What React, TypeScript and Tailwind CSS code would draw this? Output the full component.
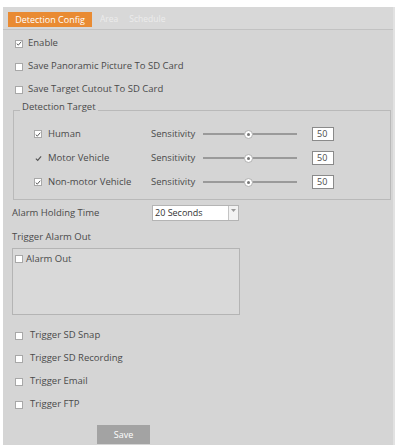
import React from 'react';

const Box = ({ checked, bare }: { checked?: boolean; bare?: boolean }) => (
  <span
    className={`w-[8px] h-[8px] shrink-0 flex items-center justify-center ${
      bare ? '' : 'bg-white border border-[#a8a8a8]'
    }`}
  >
    {checked && (
      <svg width="7" height="7" viewBox="0 0 8 8">
        <path d="M1 4.2 L3.1 6.2 L7 1.6" fill="none" stroke="#555" strokeWidth="1.3" />
      </svg>
    )}
  </span>
);

const Check = ({ label, checked, bare, gap = 'gap-[5px]' }: { label: string; checked?: boolean; bare?: boolean; gap?: string }) => (
  <label className={`flex items-center ${gap}`}>
    <Box checked={checked} bare={bare} />
    <span>{label}</span>
  </label>
);

const targets = [
  { name: 'Human', bare: false },
  { name: 'Motor Vehicle', bare: true },
  { name: 'Non-motor Vehicle', bare: false },
];

const triggers = ['Trigger SD Snap', 'Trigger SD Recording', 'Trigger Email', 'Trigger FTP'];

export default function App() {
  return (
    <div
      className="w-[398px] h-[445px] bg-white overflow-hidden pt-[7px] pl-[3px] text-[9.5px] text-[#4a4a4a]"
      style={{ fontFamily: '"Open Sans", "Noto Sans", sans-serif' }}
    >
      <div className="w-[392px] h-[438px] bg-[#d5d5d5] border-r-[2px] border-[#e2e2e2]">
        {/* Tabs */}
        <div className="h-[23px] flex items-end pl-[5px] pb-[2px] border-b border-[#c2c2c2] bg-[#d8d8d8]">
          <div className="h-[15px] w-[84px] bg-[#e98b33] text-white text-[9px] flex items-center justify-center">Detection Config</div>
          <div className="h-[15px] flex items-center text-[8.5px] text-[#ececec] ml-[8px]">Area</div>
          <div className="h-[15px] flex items-center text-[8.5px] text-[#ececec] ml-[11px]">Schedule</div>
        </div>

        <div className="pl-[12px]">
          <div className="h-[23px] mt-[2px] flex items-center">
            <Check label="Enable" checked />
          </div>
          <div className="h-[23px] flex items-center">
            <Check label="Save Panoramic Picture To SD Card" />
          </div>
          <div className="h-[23px] flex items-center">
            <Check label="Save Target Cutout To SD Card" />
          </div>
        </div>

        {/* Detection Target */}
        <fieldset className="ml-[10px] mr-[2px] border border-[#b9b9b9] pt-[2px] pb-[5px]">
          <legend className="ml-[6px] px-[2px] leading-[10px] pb-[8px] pt-[1px]">Detection Target</legend>
          {targets.map(t => (
            <div key={t.name} className="h-[24px] flex items-center">
              <div className="w-[137px] pl-[20px]">
                <Check label={t.name} checked bare={t.bare} gap="gap-[6px]" />
              </div>
              <span className="w-[52px]">Sensitivity</span>
              <div className="w-[94px] h-[10px] relative flex items-center">
                <div className="w-full h-[2px] bg-[#9a9a9a]" />
                <div className="absolute left-[41px] w-[9px] h-[9px] rounded-full bg-white border border-[#b0b0b0] flex items-center justify-center">
                  <div className="w-[3px] h-[3px] rounded-full bg-[#777]" />
                </div>
              </div>
              <div className="ml-[15px] w-[22px] h-[14px] bg-white border border-[#8a8a8a] flex items-center pl-[4px] text-[9px]">50</div>
            </div>
          ))}
        </fieldset>

        <div className="pl-[9px]">
          <div className="h-[26px] flex items-center">
            <span className="w-[140px]">Alarm Holding Time</span>
            <div className="h-[16px] w-[87px] flex bg-white border border-[#b4b4b4]">
              <span className="flex-1 flex items-center pl-[2px] text-[9px] text-[#333]">20 Seconds</span>
              <span className="w-[10px] border-l border-[#c4c4c4] bg-[#f2f2f2] flex items-start justify-center pt-[3px]">
                <svg width="5" height="3" viewBox="0 0 5 3">
                  <path d="M0 0 L5 0 L2.5 3 Z" fill="#999" />
                </svg>
              </span>
            </div>
          </div>
          <div className="h-[22px] flex items-center">Trigger Alarm Out</div>
          <div className="w-[228px] h-[67px] border border-[#b4b4b4] bg-[#d9d9d9] pt-[3px] pl-[2px]">
            <Check label="Alarm Out" gap="gap-[3px]" />
          </div>

          <div className="mt-[9px] pl-[3px]">
            {triggers.map(t => (
              <div key={t} className="h-[23px] flex items-center">
                <Check label={t} gap="gap-[7px]" />
              </div>
            ))}
          </div>

          <button className="mt-[9px] ml-[85px] w-[53px] h-[19px] bg-[#a3a3a3] text-white text-[9px] flex items-center justify-center">
            Save
          </button>
        </div>
      </div>
    </div>
  );
}
